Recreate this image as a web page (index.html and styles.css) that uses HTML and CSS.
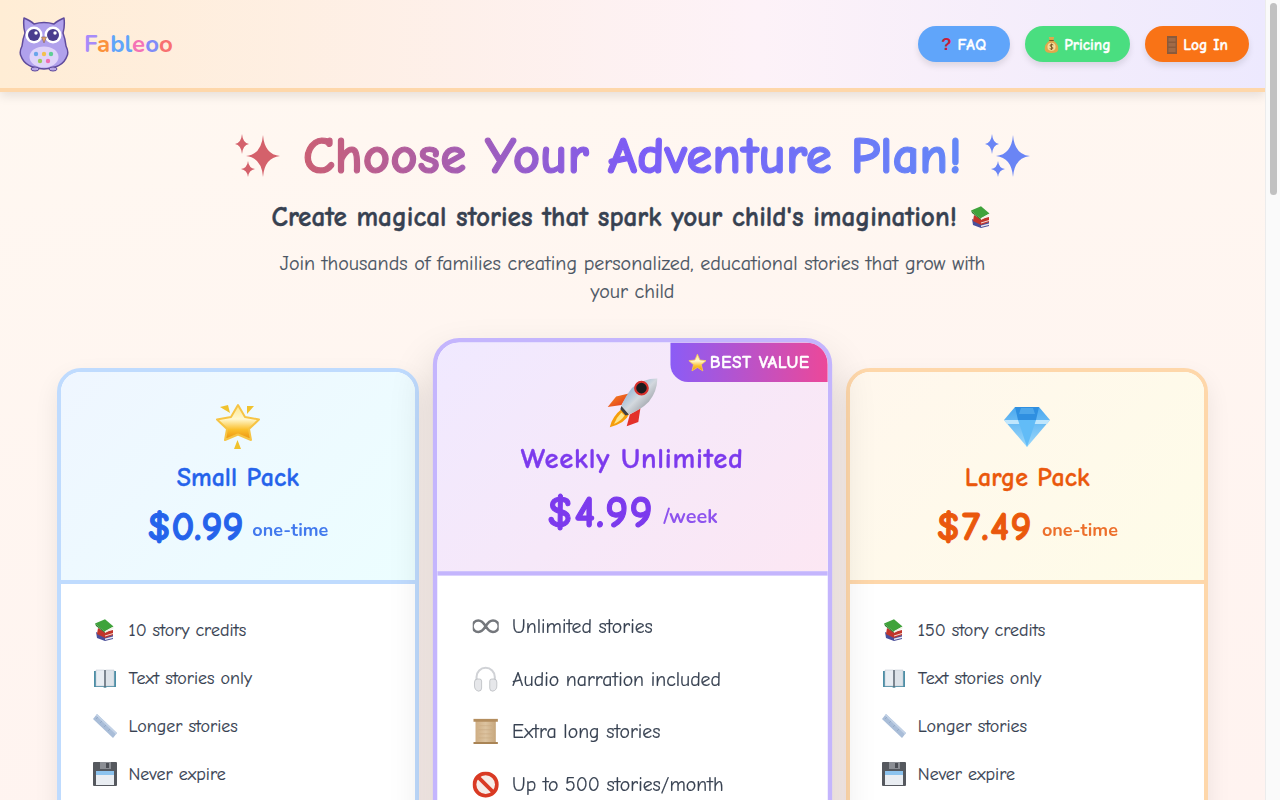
FILE: index.html
```html
<!DOCTYPE html>
<html lang="en">
<head>
  <meta charset="UTF-8">
  <meta name="viewport" content="width=device-width, initial-scale=1.0">
  <title>Fableoo - Pricing</title>
  <link rel="stylesheet" href="styles.css">
</head>
<body>
  <!-- icon sprite -->
  <svg class="sprite" aria-hidden="true">
    <defs>
      <linearGradient id="g-star" x1="0" y1="0" x2="0" y2="1">
        <stop offset="0" stop-color="#fde68a"/>
        <stop offset="0.4" stop-color="#fff8d0"/>
        <stop offset="0.7" stop-color="#fbc02d"/>
        <stop offset="1" stop-color="#ea8f0c"/>
      </linearGradient>
      <linearGradient id="g-body" x1="0" y1="0" x2="1" y2="1">
        <stop offset="0" stop-color="#5f9bd0"/>
        <stop offset="0.5" stop-color="#d3d8de"/>
        <stop offset="1" stop-color="#74787f"/>
      </linearGradient>
      <linearGradient id="g-fin" x1="0" y1="0" x2="1" y2="1">
        <stop offset="0" stop-color="#f7941e"/>
        <stop offset="1" stop-color="#e02b20"/>
      </linearGradient>
      <linearGradient id="g-gem" x1="0" y1="0" x2="0" y2="1">
        <stop offset="0" stop-color="#4aa8ef"/>
        <stop offset="1" stop-color="#9bd8fb"/>
      </linearGradient>
      <linearGradient id="g-scroll" x1="0" y1="0" x2="1" y2="0">
        <stop offset="0" stop-color="#cfae84"/>
        <stop offset="0.5" stop-color="#dcc3a0"/>
        <stop offset="1" stop-color="#c6a67c"/>
      </linearGradient>
    </defs>
    <symbol id="i-star" viewBox="0 0 48 48">
      <path d="M6 4 L14 2 L16 10Z M40 3 L33 3 L33 11Z M23.500 37 L27 46 H20Z" fill="#f0c22e"/>
      <path d="M24 2 L31 14 L45 16.500 L35 26 L37 37 L24 31.500 L11 37 L13 26 L3 16.500 L17 14Z" fill="url(#g-star)" stroke="#f6c445" stroke-width="2" stroke-linejoin="round"/>
    </symbol>
    <symbol id="i-rocket" viewBox="0 0 50 50">
      <path d="M2 29 L10 19 L22 16 L15 27Z" fill="url(#g-fin)"/>
      <path d="M20 47 L23 36 L33 30 L31 43Z" fill="#e3312a"/>
      <path d="M16 30 L22 36 Q19 44 4 48 Q6 38 16 30Z" fill="#f59e0b"/>
      <path d="M15 34 L18 37 Q15 42 8 45 Q10 39 15 34Z" fill="#fde68a"/>
      <path d="M49 2 Q35 2 25 11 Q18 20 15 28 L22 36 Q33 32 41 24 Q49 14 49 2Z" fill="url(#g-body)"/>
      <circle cx="34" cy="11" r="6" fill="#1b1b1f" stroke="#d7312c" stroke-width="2"/>
      <path d="M15 28 L22 36 L19 37 L14 31Z" fill="#3d4045"/>
    </symbol>
    <symbol id="i-gem" viewBox="0 0 48 42">
      <path d="M12 1 H36 L47 14 L24 41 L1 14Z" fill="url(#g-gem)"/>
      <path d="M12 1 H36 L33 14 H15Z" fill="#2f8fe0"/>
      <path d="M1 14 H47 L44 18 H4Z" fill="#bfe6fd"/>
      <path d="M15 14 H33 L24 41Z" fill="#62bcf7"/>
      <path d="M18 2 H30 L32 8 H16Z" fill="#4da6ea"/>
    </symbol>
    <symbol id="i-books" viewBox="0 0 24 24">
      <path d="M3 14 L11 18 L20 17 V21 L12 23 L4 20Z" fill="#4a4f9a"/>
      <path d="M12 20.500 L20 18.500 V20 L12 22Z" fill="#e8e8f0"/>
      <path d="M5 10 L12 14 L20 12 V17 L12 20 L4 16Z" fill="#c1352b"/>
      <path d="M12 17.500 L20 15 V16 L12 18.500Z" fill="#f4dcd4"/>
      <path d="M2 5.500 L12 1.300 L20.500 8.500 L11.500 13.500Z" fill="#3fa33b"/>
      <path d="M11.500 13.500 L20.500 8.500 V10.500 L12 15Z" fill="#f2f1e8"/>
      <path d="M2 5.500 L11.500 13.500 L12 15 L3 8Z" fill="#2f8030"/>
    </symbol>
    <symbol id="i-book" viewBox="0 0 24 24">
      <path d="M1 5 H23 V21 H14 L12 22 L10 21 H1Z" fill="#4d8fa6"/>
      <path d="M3 4 H11 Q12 4 12 5 V20 H3Z" fill="#e9eef3" stroke="#b8c2cc" stroke-width="0.500"/>
      <path d="M21 4 H13 Q12 4 12 5 V20 H21Z" fill="#dde3e9" stroke="#b8c2cc" stroke-width="0.500"/>
      <path d="M11.300 4 H12.700 V21 H11.300Z" fill="#58636e"/>
    </symbol>
    <symbol id="i-ruler" viewBox="0 0 24 24">
      <path d="M4 0 L24 19 L20 24 L0 5Z" fill="#a9bdd8"/>
      <path d="M4 0 L24 19 L23 20.500 L3 1.500Z" fill="#c3d2e6"/>
      <path d="M3 5 L5 3 M7 9 L9 7 M11 13 L13 11 M15 17 L17 15" stroke="#8ea3c0" stroke-width="0.700"/>
    </symbol>
    <symbol id="i-floppy" viewBox="0 0 24 24">
      <path d="M0 1 Q0 0 1 0 H23 Q24 0 24 1 V23 Q24 24 23 24 H1 Q0 24 0 23Z" fill="#55585e"/>
      <path d="M7 0 H18 V7 H7Z" fill="#8b8e94"/>
      <path d="M13 1 H16 V6 H13Z" fill="#4b4e54"/>
      <path d="M3 9 H21 V23 H3Z" fill="#e9edf2"/>
      <path d="M3 9 H21 V13 H3Z" fill="#8cc3ee"/>
    </symbol>
    <symbol id="i-infinity" viewBox="0 0 26 14">
      <path d="M13 7 C10 2 7.500 1.300 5.800 1.300 A5.700 5.700 0 0 0 5.800 12.700 C7.500 12.700 10 12 13 7 C16 2 18.500 1.300 20.200 1.300 A5.700 5.700 0 0 1 20.200 12.700 C18.500 12.700 16 12 13 7Z" fill="none" stroke="#74777c" stroke-width="2.500"/>
    </symbol>
    <symbol id="i-phones" viewBox="0 0 24 26">
      <path d="M3 15 V11 A9 9 0 0 1 21 11 V15" fill="none" stroke="#d0d2d6" stroke-width="2"/>
      <path d="M1 16 Q1 13 4 13 L6 13 Q8 13 8 15 V22 Q8 25 5 25 Q1 24 1 20Z" fill="#e6e7ea" stroke="#a9acb1" stroke-width="0.600"/>
      <path d="M23 16 Q23 13 20 13 L18 13 Q16 13 16 15 V22 Q16 25 19 25 Q23 24 23 20Z" fill="#e6e7ea" stroke="#a9acb1" stroke-width="0.600"/>
    </symbol>
    <symbol id="i-scroll" viewBox="0 0 24 26">
      <path d="M2 2 H22 V24 H2Z" fill="url(#g-scroll)"/>
      <path d="M0 0 H24 V3 H0Z" fill="#b48e5f"/>
      <path d="M0 23 H24 V25 H0Z" fill="#a98455"/>
      <path d="M6 7 H18 M5 11 H19 M6 15 H18 M5 19 H19" stroke="#c9a981" stroke-width="0.600"/>
    </symbol>
    <symbol id="i-noentry" viewBox="0 0 24 24">
      <circle cx="12" cy="12" r="10.200" fill="#f6ece8" stroke="#d93a24" stroke-width="3.400"/>
      <path d="M4.500 4.500 L19.500 19.500" stroke="#d93a24" stroke-width="3.400"/>
    </symbol>
    <symbol id="i-bag" viewBox="0 0 16 20">
      <path d="M5 1 H11 L10 5 Q16 9 15.500 15 Q15 19 8 19 Q1 19 .500 15 Q0 9 6 5Z" fill="#e0a84c"/>
      <path d="M5.500 5 H10.500" stroke="#7c5420" stroke-width="1.200"/>
      <circle cx="8" cy="12" r="4.500" fill="#f5dc9a"/>
      <path d="M10 10 Q8 8.500 6.500 10 Q6 11.500 8 12 Q10 12.500 9.500 14 Q8 15.500 6 14 M8 8.500 V15.500" fill="none" stroke="#6e4a1a" stroke-width="0.900"/>
    </symbol>
    <symbol id="i-door" viewBox="0 0 12 18">
      <path d="M1 0 H11 V18 H1Z" fill="#8a5a3c"/>
      <path d="M2.500 2 H9.500 V5.500 H2.500Z M2.500 7 H9.500 V10.500 H2.500Z M2.500 12 H9.500 V16 H2.500Z" fill="#a06a48"/>
    </symbol>
    <symbol id="i-badge-star" viewBox="0 0 24 24">
      <path d="M12 1 L15.200 8.500 L23 9.300 L17 14.500 L19 22.500 L12 18 L5 22.500 L7 14.500 L1 9.300 L8.800 8.500Z" fill="url(#g-star)" stroke="#f8cf55" stroke-width="1" stroke-linejoin="round"/>
    </symbol>
    <symbol id="i-sparkle" viewBox="0 0 45 44">
      <path d="M28 1 Q29.500 20.500 45 22 Q29.500 23.500 28 43 Q26.500 23.500 11 22 Q26.500 20.500 28 1Z M7 0 Q7.800 9 14 10 Q7.800 11 7 20 Q6.200 11 0 10 Q6.200 9 7 0Z M13 27 Q13.800 34 20 35 Q13.800 36 13 43 Q12.200 36 6 35 Q12.200 34 13 27Z"/>
    </symbol>
  </svg>

  <header class="topbar">
    <a class="brand" href="#">
      <svg class="owl" viewBox="0 0 50 56" width="50" height="56">
        <path d="M5 2 Q12 5 15 8 Q25 5 35 8 Q38 5 45 2 Q46 10 44 17 Q46 22 47 30 Q50 36 48 40 Q44 52 25 53 Q6 52 2 40 Q0 36 3 30 Q4 22 6 17 Q4 10 5 2Z" fill="#b0a1ec" stroke="#5f4b9c" stroke-width="1.500" stroke-linejoin="round"/>
        <ellipse cx="25" cy="41" rx="14.500" ry="10.500" fill="#dfd3f9"/>
        <circle cx="15" cy="19" r="8.500" fill="#fff"/>
        <circle cx="34" cy="19" r="8.500" fill="#fff"/>
        <circle cx="15" cy="19" r="6" fill="#4a3d8e"/>
        <circle cx="34" cy="19" r="6" fill="#4a3d8e"/>
        <circle cx="17" cy="17" r="1.700" fill="#fff"/>
        <circle cx="36" cy="17" r="1.700" fill="#fff"/>
        <path d="M22.500 21 H27.500 L25 27Z" fill="#dfa269" stroke="#7a5a56" stroke-width="0.500"/>
        <circle cx="17" cy="38" r="2.200" fill="#6aa5ea"/>
        <circle cx="25" cy="38" r="2.200" fill="#f2c14e"/>
        <circle cx="32" cy="38" r="2.200" fill="#5fcf96"/>
        <circle cx="21" cy="45" r="2.200" fill="#9ccb5a"/>
        <circle cx="29" cy="45" r="2.200" fill="#ee6fb0"/>
        <ellipse cx="16" cy="53" rx="4" ry="2" fill="#b9a6e6" stroke="#5f4b9c"/>
        <ellipse cx="34" cy="53" rx="4" ry="2" fill="#b9a6e6" stroke="#5f4b9c"/>
      </svg>
      <span class="wordmark"><i class="c1">F</i><i class="c2">a</i><i class="c3">b</i><i class="c4">l</i><i class="c5">e</i><i class="c6">o</i><i class="c7">o</i></span>
    </a>
    <nav class="nav">
      <a class="pill pill-blue" href="#"><span class="qmark">?</span>FAQ</a>
      <a class="pill pill-green" href="#"><svg class="pill-ico bag"><use href="#i-bag"/></svg>Pricing</a>
      <a class="pill pill-orange" href="#"><svg class="pill-ico door"><use href="#i-door"/></svg>Log In</a>
    </nav>
  </header>

  <main class="page">
    <section class="hero">
      <h1>
        <svg class="sparkle sparkle-red"><use href="#i-sparkle"/></svg>
        <span class="h1-text">Choose Your Adventure Plan!</span>
        <svg class="sparkle sparkle-blue"><use href="#i-sparkle"/></svg>
      </h1>
      <p class="tagline">Create magical stories that spark your child's imagination! <svg class="tag-ico"><use href="#i-books"/></svg></p>
      <p class="lead">Join thousands of families creating personalized, educational stories that grow with your child</p>
    </section>

    <section class="plans">
      <article class="plan plan-blue">
        <div class="plan-head">
          <svg class="plan-icon"><use href="#i-star"/></svg>
          <h3>Small Pack</h3>
          <div class="price"><b>$0.99</b><span>one-time</span></div>
        </div>
        <ul class="features">
          <li><svg class="ico"><use href="#i-books"/></svg>10 story credits</li>
          <li><svg class="ico"><use href="#i-book"/></svg>Text stories only</li>
          <li><svg class="ico"><use href="#i-ruler"/></svg>Longer stories</li>
          <li><svg class="ico"><use href="#i-floppy"/></svg>Never expire</li>
        </ul>
      </article>

      <article class="plan plan-violet">
        <div class="ribbon"><svg class="ribbon-ico"><use href="#i-badge-star"/></svg>BEST VALUE</div>
        <div class="plan-head">
          <svg class="plan-icon"><use href="#i-rocket"/></svg>
          <h3>Weekly Unlimited</h3>
          <div class="price"><b>$4.99</b><span>/week</span></div>
        </div>
        <ul class="features">
          <li><svg class="ico"><use href="#i-infinity"/></svg>Unlimited stories</li>
          <li><svg class="ico"><use href="#i-phones"/></svg>Audio narration included</li>
          <li><svg class="ico"><use href="#i-scroll"/></svg>Extra long stories</li>
          <li><svg class="ico"><use href="#i-noentry"/></svg>Up to 500 stories/month</li>
        </ul>
      </article>

      <article class="plan plan-orange">
        <div class="plan-head">
          <svg class="plan-icon"><use href="#i-gem"/></svg>
          <h3>Large Pack</h3>
          <div class="price"><b>$7.49</b><span>one-time</span></div>
        </div>
        <ul class="features">
          <li><svg class="ico"><use href="#i-books"/></svg>150 story credits</li>
          <li><svg class="ico"><use href="#i-book"/></svg>Text stories only</li>
          <li><svg class="ico"><use href="#i-ruler"/></svg>Longer stories</li>
          <li><svg class="ico"><use href="#i-floppy"/></svg>Never expire</li>
        </ul>
      </article>
    </section>
  </main>

  <!-- page scrollbar -->
  <div class="scrollbar"><div class="scrollbar-thumb"></div></div>
</body>
</html>
```
FILE: styles.css
```css
* {
  box-sizing: border-box;
}
body {
  margin: 0;
  padding-right: 15px;
  font-family: "Comic Sans MS", "Comic Neue", cursive;
  color: #374151;
  background: linear-gradient(170deg, #fff8f1, #fff3f0) no-repeat;
  background-size: 100% 800px;
}
a {
  text-decoration: none;
}
.sprite {
  position: absolute;
  width: 0;
  height: 0;
}
.scrollbar {
  position: fixed;
  top: 0;
  right: 0;
  bottom: 0;
  width: 15px;
  padding: 3px 3px 0 4px;
  background: #fafafa;
  border-left: 1px solid #ececec;
}
.scrollbar-thumb {
  height: 192px;
  border-radius: 4px;
  background: #c1c1c1;
}

/* header */
.topbar {
  height: 92px;
  display: flex;
  align-items: center;
  justify-content: space-between;
  padding: 0 16px 0 19px;
  background: linear-gradient(90deg, #ffedd5, #fdf2f8 60%, #ede9fe);
  border-bottom: 4px solid #fed7aa;
  box-shadow: 0 4px 10px rgba(0, 0, 0, 0.1);
}
.brand {
  display: flex;
  align-items: center;
  gap: 15px;
}
.wordmark {
  font-family: Nunito, Lato, sans-serif;
  font-size: 24px;
  font-weight: 700;
}
.wordmark i {
  font-style: normal;
}
.c1 { color: #a78bfa; }
.c2 { color: #fb923c; }
.c3 { color: #60a5fa; }
.c4 { color: #60a5fa; }
.c5 { color: #f472b6; }
.c6 { color: #818cf8; }
.c7 { color: #f87171; }
.nav {
  display: flex;
  gap: 15px;
}
.pill {
  height: 36px;
  padding-top: 2px;
  display: flex;
  align-items: center;
  justify-content: center;
  gap: 5px;
  border-radius: 18px;
  color: #fff;
  font-size: 15.500px;
  font-weight: 700;
  -webkit-text-stroke: 0.3px #fff;
  box-shadow: 0 4px 6px rgba(0, 0, 0, 0.1);
}
.pill-blue { width: 92px; background: #60a5fa; letter-spacing: 0.8px; }
.pill-green { width: 105px; background: #4ade80; }
.pill-orange { width: 104px; background: #f97316; }
.qmark {
  font-family: "Liberation Sans", sans-serif;
  font-size: 17px;
  color: #c81e3a;
  -webkit-text-stroke: 0;
}
.pill-ico.bag { width: 15px; height: 18px; }
.pill-ico.door { width: 12px; height: 18px; }

/* hero */
.page {
  max-width: 1152px;
  margin: 0 auto;
  padding-top: 34px;
}
.hero {
  text-align: center;
}
h1 {
  display: flex;
  align-items: center;
  justify-content: center;
  gap: 23px;
  margin: 0 0 16px;
  font-size: 53px;
  line-height: 60px;
  font-weight: 700;
}
.h1-text {
  color: transparent;
  background: linear-gradient(90deg, #ca5f74, #7c5cf6 50%, #6487f7);
  background-clip: text;
  -webkit-background-clip: text;
  -webkit-text-stroke: 1.200px transparent;
}
.sparkle {
  width: 45px;
  height: 44px;
}
.sparkle-red { fill: #d4616b; }
.sparkle-blue { fill: #6a85f5; }
.tagline {
  margin: 0 0 16px;
  font-size: 27.200px;
  line-height: 32px;
  font-weight: 700;
  -webkit-text-stroke: 0.4px #374151;
}
.tag-ico {
  width: 24px;
  height: 24px;
  margin-left: 3px;
  vertical-align: -3px;
}
.lead {
  width: 730px;
  margin: 0 auto 62px;
  font-size: 20px;
  line-height: 28px;
  color: #4b5563;
  -webkit-text-stroke: 0.15px #4b5563;
}

/* plans */
.plans {
  display: grid;
  grid-template-columns: repeat(3, 1fr);
  gap: 32px;
}
.plan {
  position: relative;
  height: 600px;
  border: 4px solid;
  border-radius: 24px;
  background: #fff;
  overflow: hidden;
  box-shadow: 0 10px 25px rgba(0, 0, 0, 0.08);
}
.plan-blue { border-color: #bfdbfe; }
.plan-violet {
  border-color: #c4b5fd;
  transform: scale(1.1);
  z-index: 1;
  box-shadow: 0 20px 40px rgba(0, 0, 0, 0.16);
}
.plan-orange { border-color: #fed7aa; }
.plan-head {
  height: 212px;
  padding-top: 31px;
  text-align: center;
  border-bottom: 4px solid;
}
.plan-blue .plan-head { background: linear-gradient(135deg, #eff6ff, #ecfeff); border-color: #bfdbfe; color: #2563eb; }
.plan-violet .plan-head { background: linear-gradient(135deg, #f0e9ff, #fce7f3); border-color: #c4b5fd; color: #7c3aed; }
.plan-orange .plan-head { background: linear-gradient(135deg, #fff7ed, #fefce8); border-color: #fed7aa; color: #ea580c; }
.plan-icon {
  display: block;
  width: 48px;
  height: 48px;
  margin: 0 auto 9px;
}
h3 {
  margin: 0 0 9px;
  font-size: 26px;
  line-height: 36px;
  -webkit-text-stroke: 0.3px currentColor;
}
.plan-violet h3 {
  letter-spacing: 0.7px;
}
.price {
  display: flex;
  align-items: baseline;
  justify-content: center;
  gap: 9px;
  line-height: 44px;
}
.price b {
  font-size: 40px;
  -webkit-text-stroke: 1px currentColor;
}
.plan-violet .price b {
  letter-spacing: 1px;
}
.plan-orange .price b {
  letter-spacing: 1.5px;
}
.price span {
  font-family: Nunito, Lato, sans-serif;
  font-size: 18px;
  font-weight: 700;
  opacity: 0.85;
  transform: translateY(-4px);
}
.ribbon {
  position: absolute;
  top: 0;
  right: 0;
  z-index: 1;
  display: flex;
  align-items: center;
  gap: 3px;
  height: 36px;
  padding: 0 16px;
  color: #fff;
  font-size: 16px;
  font-weight: 700;
  letter-spacing: 0.5px;
  -webkit-text-stroke: 0.3px #fff;
  background: linear-gradient(90deg, #8b5cf6, #ec4899);
  border-bottom-left-radius: 16px;
}
.ribbon-ico {
  width: 17px;
  height: 17px;
}
.features {
  list-style: none;
  margin: 0;
  padding: 30px 32px;
}
.features li {
  display: flex;
  align-items: center;
  height: 32px;
  margin-bottom: 16px;
  font-size: 18px;
  -webkit-text-stroke: 0.15px #374151;
}
.ico {
  flex: none;
  width: 24px;
  height: 24px;
  margin-right: 12px;
}
```
